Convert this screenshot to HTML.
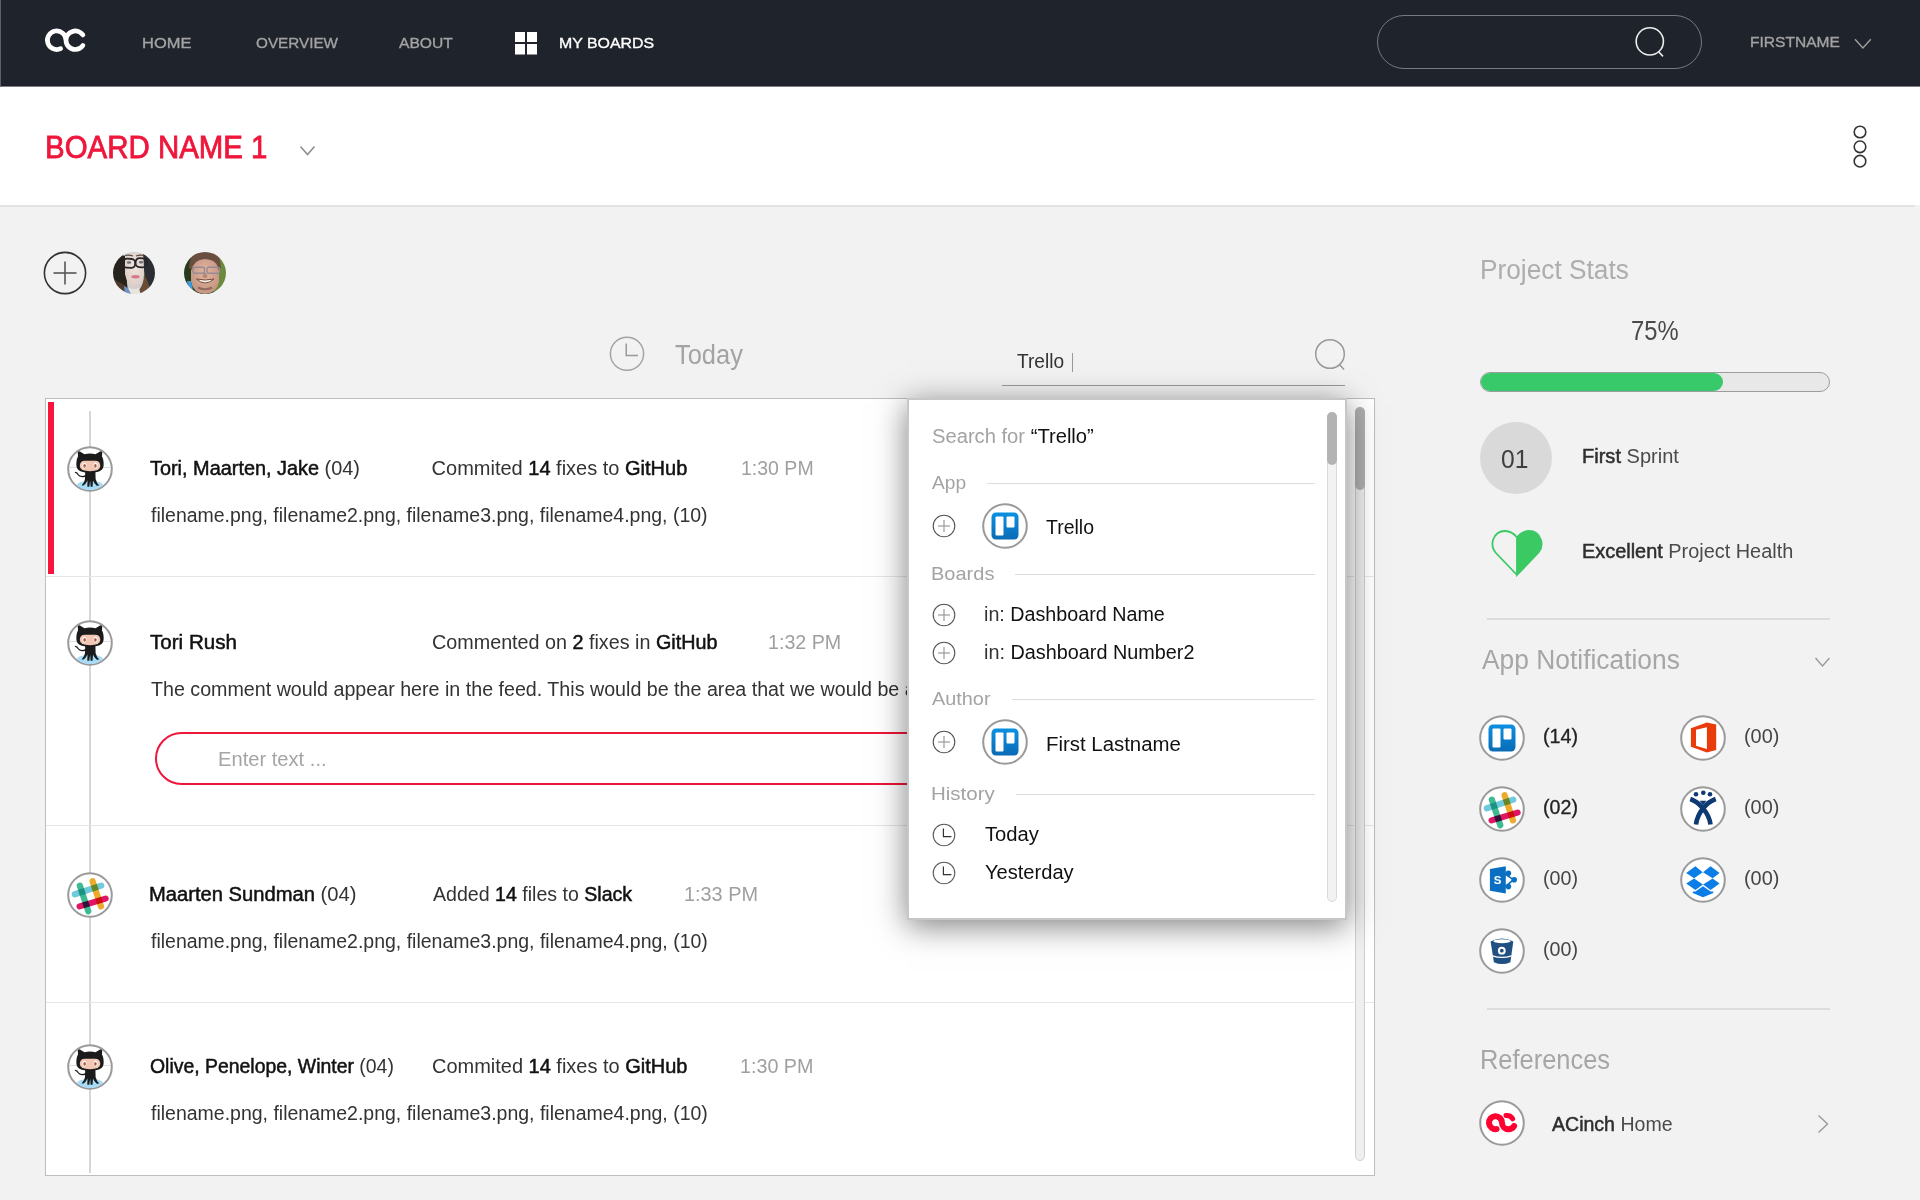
<!DOCTYPE html>
<html><head><meta charset="utf-8"><title>Board</title>
<style>
html,body{margin:0;padding:0;}
body{width:1920px;height:1200px;position:relative;overflow:hidden;background:#f2f2f2;font-family:"Liberation Sans",sans-serif;}
.t{position:absolute;white-space:nowrap;line-height:1;transform-origin:0 0;}
.m{-webkit-text-stroke:0.5px currentColor;}
</style></head><body>
<div style="position:absolute;left:0px;top:0px;width:1920px;height:86px;background:#1f232b"></div>
<div style="position:absolute;left:0px;top:85px;width:1920px;height:1px;background:#1b1f26"></div>
<div style="position:absolute;left:0px;top:86px;width:1920px;height:1px;background:rgba(31,35,43,0.55)"></div>
<div style="position:absolute;left:0px;top:0px;width:1px;height:87px;background:#5d6167"></div>
<svg style="position:absolute;left:40px;top:22px;" width="52" height="36" viewBox="0 0 52 36"><path d="M20.63 26.63 A9.3 9.3 0 1 1 26 18.2 A9.3 9.3 0 0 0 35.3 27.5 A9.3 9.3 0 0 0 42.9 23.5 M26 18.2 A9.3 9.3 0 0 1 42.9 12.9" fill="none" stroke="#fff" stroke-width="4.7" stroke-linecap="round"/></svg>
<div id="nav_home" class="t" style="left:142.4px;top:35.18px;font-size:15.5px;color:#a3a3a3;transform:scaleX(1.0628);-webkit-text-stroke:0.35px currentColor;">HOME</div>
<div id="nav_over" class="t" style="left:255.6px;top:35.18px;font-size:15.5px;color:#a3a3a3;transform:scaleX(0.9853);-webkit-text-stroke:0.35px currentColor;">OVERVIEW</div>
<div id="nav_about" class="t" style="left:399.4px;top:35.18px;font-size:15.5px;color:#a3a3a3;transform:scaleX(1.0088);-webkit-text-stroke:0.35px currentColor;">ABOUT</div>
<svg style="position:absolute;left:515px;top:32px;" width="22" height="23" viewBox="0 0 22 23"><rect x="0" y="0" width="10" height="10" fill="#fff"/><rect x="12" y="0" width="10" height="10" fill="#fff"/><rect x="0" y="12" width="10" height="10.5" fill="#fff"/><rect x="12" y="12" width="10" height="10.5" fill="#fff"/></svg>
<div id="nav_boards" class="t" style="left:559.0px;top:35.18px;font-size:15.5px;color:#ffffff;transform:scaleX(1.0253);-webkit-text-stroke:0.35px currentColor;">MY BOARDS</div>
<div style="position:absolute;left:1377px;top:15px;width:325px;height:53.5px;box-sizing:border-box;border:1.7px solid #777a80;border-radius:27px"></div>
<svg style="position:absolute;left:1630px;top:22px;" width="40" height="40" viewBox="0 0 40 40"><circle cx="19.8" cy="19.4" r="13.6" fill="none" stroke="#eee" stroke-width="1.6"/><line x1="28.6" y1="29.8" x2="33" y2="34.4" stroke="#eee" stroke-width="1.6"/></svg>
<div id="nav_first" class="t" style="left:1749.7px;top:34.18px;font-size:15.5px;color:#a3a3a3;transform:scaleX(1.0032);-webkit-text-stroke:0.35px currentColor;">FIRSTNAME</div>
<svg style="position:absolute;left:1853px;top:36px;" width="20" height="14" viewBox="0 0 20 14"><polyline points="2,3.2 9.9,12 17.8,3.2" fill="none" stroke="#a0a0a0" stroke-width="1.4"/></svg>
<div style="position:absolute;left:0px;top:87px;width:1920px;height:118px;background:#fff"></div>
<div style="position:absolute;left:0px;top:205px;width:1915px;height:2px;background:#e3e3e3"></div>
<div id="title" class="t" style="left:44.6px;top:131.76px;font-size:31px;color:#ef163b;-webkit-text-stroke:0.5px currentColor;transform:scaleX(0.9497);-webkit-text-stroke:0.8px currentColor;">BOARD NAME 1</div>
<svg style="position:absolute;left:298px;top:142px;" width="20" height="16" viewBox="0 0 20 16"><polyline points="2.5,4.5 9.5,12.5 16.5,4.5" fill="none" stroke="#8c8c8c" stroke-width="1.5"/></svg>
<svg style="position:absolute;left:1848px;top:122px;" width="24" height="48" viewBox="0 0 24 48"><circle cx="12" cy="10" r="5.8" fill="none" stroke="#333" stroke-width="1.6"/><circle cx="12" cy="24.8" r="5.8" fill="none" stroke="#333" stroke-width="1.6"/><circle cx="12" cy="39.2" r="5.8" fill="none" stroke="#333" stroke-width="1.6"/></svg>
<svg style="position:absolute;left:42px;top:250px;" width="46" height="46" viewBox="0 0 46 46"><circle cx="23" cy="23" r="20.6" fill="none" stroke="#333" stroke-width="1.6"/><line x1="11.5" y1="23" x2="34.5" y2="23" stroke="#555" stroke-width="1.6"/><line x1="23" y1="11.5" x2="23" y2="34.5" stroke="#555" stroke-width="1.6"/></svg>
<svg style="position:absolute;left:112.9px;top:251.8px;" width="42" height="42" viewBox="0 0 42 42"><defs><clipPath id="ca1"><circle cx="21" cy="21" r="21"/></clipPath>
<filter id="bl1" x="-10%" y="-10%" width="120%" height="120%"><feGaussianBlur stdDeviation="0.55"/></filter>
<radialGradient id="gface" cx="0.5" cy="0.4" r="0.6"><stop offset="0" stop-color="#f0e6e2"/><stop offset="1" stop-color="#dccbc4"/></radialGradient></defs>
<g clip-path="url(#ca1)"><g filter="url(#bl1)"><rect x="-2" y="-2" width="46" height="46" fill="#cfcfcf"/>
<path d="M-2 4 Q6 1 12 4 L14 20 Q13 30 16 44 L-2 44Z" fill="#27221f"/>
<path d="M-2 26 Q6 30 13 34 L16 44 L-2 44Z" fill="#4e3a2c"/>
<path d="M30 2 Q40 4 44 10 L44 44 L27 44 Q33 30 31 18Z" fill="#2c2e33"/>
<path d="M31 22 Q31 32 26 38 L27 44 L38 44 Q37 32 31 22Z" fill="#6a4c36"/>
<path d="M12 3 Q21 -1 30 3 L31 22 Q29 33 21 36 Q14 33 12 22Z" fill="url(#gface)"/>
<path d="M12 3.5 Q16 2.5 20 4" fill="none" stroke="#5a4a44" stroke-width="1.2"/><path d="M23 4 Q27 2.5 31 3.5" fill="none" stroke="#5a4a44" stroke-width="1.2"/>
<ellipse cx="16" cy="10.5" rx="2.2" ry="1.3" fill="#6b6f78"/><ellipse cx="28" cy="10.2" rx="2.2" ry="1.3" fill="#6b6f78"/>
<rect x="10.2" y="6.8" width="12" height="9" rx="3.8" fill="none" stroke="#262626" stroke-width="1.8" transform="rotate(4 16 11)"/>
<rect x="22.6" y="6.2" width="11" height="9" rx="3.8" fill="none" stroke="#262626" stroke-width="1.8" transform="rotate(4 28 11)"/>
<ellipse cx="22.5" cy="24.8" rx="4.2" ry="1.7" fill="#d87987"/>
<path d="M16 36 Q21 38 26 36 L28 44 L14 44Z" fill="#e9e4df"/>
<path d="M11 34 L15 36 L19 44 L12 44Z" fill="#6f90c4"/></g></g></svg>
<svg style="position:absolute;left:184px;top:252px;" width="42" height="42" viewBox="0 0 42 42"><defs><clipPath id="ca2"><circle cx="21" cy="21" r="21"/></clipPath>
<filter id="bl2" x="-10%" y="-10%" width="120%" height="120%"><feGaussianBlur stdDeviation="0.55"/></filter>
<radialGradient id="gface2" cx="0.5" cy="0.45" r="0.6"><stop offset="0" stop-color="#e2b6a3"/><stop offset="1" stop-color="#c2937e"/></radialGradient></defs>
<g clip-path="url(#ca2)"><g filter="url(#bl2)"><rect x="-2" y="-2" width="46" height="46" fill="#263a1c"/>
<path d="M33 6 L44 6 L44 44 L30 44Z" fill="#6a8a3c"/>
<path d="M7 14 Q7 3 21 3 Q35 3 35 14 L35 30 Q33 41 21 42 Q9 41 7 30Z" fill="url(#gface2)"/>
<path d="M5 16 Q5 -1 21 -1 Q37 -1 37 16 L34 18 Q34 8 21 7 Q9 8 8 18Z" fill="#6b5040"/>
<rect x="9" y="15.2" width="11.5" height="6" rx="2" fill="none" stroke="#978a96" stroke-width="1.4"/>
<rect x="23" y="15.2" width="12.5" height="6" rx="2" fill="none" stroke="#978a96" stroke-width="1.4"/>
<path d="M19.5 21.5 L22.5 21.5" stroke="#978a96" stroke-width="1.2"/>
<ellipse cx="21" cy="24" rx="2.5" ry="2" fill="#b98472"/>
<path d="M12.5 27 Q21 35 30 27 Q21 29 12.5 27Z" fill="#f6f0ea" stroke="#7a4c3c" stroke-width="1"/>
<path d="M14 35.5 Q21 39 28 35.5" fill="none" stroke="#6a4a3d" stroke-width="2" opacity="0.6"/>
<path d="M3 29 L7 29 L9 38 L4 38Z" fill="#3c9ad8"/></g></g></svg>
<svg style="position:absolute;left:608px;top:335px;" width="38" height="38" viewBox="0 0 38 38"><circle cx="19" cy="18.75" r="16.6" fill="none" stroke="#a3a3a3" stroke-width="1.5"/><polyline points="18.25,8.5 18.25,20.4 30,20.4" fill="none" stroke="#999" stroke-width="1.5"/></svg>
<div id="today" class="t" style="left:675.4px;top:342.14px;font-size:27px;color:#a3a3a3;transform:scaleX(0.9421);">Today</div>
<div id="trello_in" class="t" style="left:1017.0px;top:350.87px;font-size:20px;color:#333;transform:scaleX(0.9564);">Trello</div>
<div style="position:absolute;left:1072.2px;top:353px;width:1.2px;height:19px;background:#999"></div>
<div style="position:absolute;left:1002px;top:384.5px;width:343px;height:1.5px;background:#999"></div>
<svg style="position:absolute;left:1310px;top:333px;" width="44" height="44" viewBox="0 0 44 44"><circle cx="20" cy="21" r="14.3" fill="none" stroke="#999" stroke-width="1.5"/><line x1="29.5" y1="31.5" x2="34" y2="36.5" stroke="#999" stroke-width="1.5"/></svg>
<div style="position:absolute;left:45px;top:398px;width:1330px;height:778px;box-sizing:border-box;background:#fff;border:1px solid #bdbdbd"></div>
<div style="position:absolute;left:48px;top:402px;width:6px;height:172px;background:#f8163d"></div>
<div style="position:absolute;left:89px;top:411px;width:2px;height:762px;background:#d6d6d6"></div>
<div style="position:absolute;left:46px;top:576px;width:1308px;height:1px;background:#e6e6e6"></div>
<div style="position:absolute;left:1365px;top:576px;width:9px;height:1px;background:#e6e6e6"></div>
<div style="position:absolute;left:46px;top:825px;width:1308px;height:1px;background:#e6e6e6"></div>
<div style="position:absolute;left:1365px;top:825px;width:9px;height:1px;background:#e6e6e6"></div>
<div style="position:absolute;left:46px;top:1002px;width:1308px;height:1px;background:#e6e6e6"></div>
<div style="position:absolute;left:1365px;top:1002px;width:9px;height:1px;background:#e6e6e6"></div>
<div style="position:absolute;left:1355px;top:407px;width:10px;height:754px;box-sizing:border-box;background:#efefef;border:1px solid #cfcfcf;border-radius:5px"></div>
<div style="position:absolute;left:1355px;top:407px;width:10px;height:83px;background:#b0b0b0;border-radius:5px"></div>
<svg style="position:absolute;left:67px;top:445.5px;" width="46" height="46" viewBox="0 0 46 46"><defs><clipPath id="oc1"><circle cx="23" cy="23" r="21"/></clipPath></defs>
<circle cx="23" cy="23" r="21.8" fill="#fff" stroke="#9a9a9a" stroke-width="2"/>
<g clip-path="url(#oc1)">
<line x1="2" y1="21.5" x2="44" y2="21.5" stroke="#dedede" stroke-width="1.2"/>
<ellipse cx="23" cy="39.5" rx="13" ry="4.8" fill="#a6dcf6"/>
<path d="M9.4 19.5 Q9.1 13.5 11 10.5 L10.8 6.6 Q11 4.6 12.9 5.4 Q15.6 6.7 17.5 8.3 Q23 6.6 28.5 8.3 Q30.4 6.7 33.1 5.4 Q35 4.6 35.2 6.6 L35 10.5 Q36.9 13.5 36.6 19.5 Q36.2 26.8 23 26.8 Q9.8 26.8 9.4 19.5Z" fill="#1b1b1b"/>
<path d="M12.8 20 Q12.8 14.8 18 14.8 L28 14.8 Q33.3 14.8 33.3 20 Q33.3 25.2 23 25.2 Q12.8 25.2 12.8 20Z" fill="#f2c8b4"/>
<ellipse cx="17.4" cy="19.6" rx="2" ry="2.8" fill="#fff"/><ellipse cx="28.6" cy="19.6" rx="2" ry="2.8" fill="#fff"/>
<ellipse cx="17.6" cy="19.8" rx="1.3" ry="1.9" fill="#ad5c4c"/><ellipse cx="28.4" cy="19.8" rx="1.3" ry="1.9" fill="#ad5c4c"/>
<path d="M18.2 26 L28.4 26 Q28.6 31 28.6 33 Q29.5 37 32.3 39.5 L29.8 39.8 Q27 37.5 26 34.5 L25.6 40.8 L23.6 40.8 L23.2 34.5 L22.3 40.8 L20.3 40.8 L20.5 34.5 Q19 38 16 39.8 L14.8 39.2 Q17.6 36.5 18 33 Q18 30 18.2 26Z" fill="#1b1b1b"/>
<path d="M18.5 30 Q13 31.8 11 28.5 Q10 26.6 8.5 26.4" fill="none" stroke="#1b1b1b" stroke-width="1.4" stroke-linecap="round"/>
</g></svg>
<svg style="position:absolute;left:67px;top:619.8px;" width="46" height="46" viewBox="0 0 46 46"><defs><clipPath id="oc2"><circle cx="23" cy="23" r="21"/></clipPath></defs>
<circle cx="23" cy="23" r="21.8" fill="#fff" stroke="#9a9a9a" stroke-width="2"/>
<g clip-path="url(#oc2)">
<line x1="2" y1="21.5" x2="44" y2="21.5" stroke="#dedede" stroke-width="1.2"/>
<ellipse cx="23" cy="39.5" rx="13" ry="4.8" fill="#a6dcf6"/>
<path d="M9.4 19.5 Q9.1 13.5 11 10.5 L10.8 6.6 Q11 4.6 12.9 5.4 Q15.6 6.7 17.5 8.3 Q23 6.6 28.5 8.3 Q30.4 6.7 33.1 5.4 Q35 4.6 35.2 6.6 L35 10.5 Q36.9 13.5 36.6 19.5 Q36.2 26.8 23 26.8 Q9.8 26.8 9.4 19.5Z" fill="#1b1b1b"/>
<path d="M12.8 20 Q12.8 14.8 18 14.8 L28 14.8 Q33.3 14.8 33.3 20 Q33.3 25.2 23 25.2 Q12.8 25.2 12.8 20Z" fill="#f2c8b4"/>
<ellipse cx="17.4" cy="19.6" rx="2" ry="2.8" fill="#fff"/><ellipse cx="28.6" cy="19.6" rx="2" ry="2.8" fill="#fff"/>
<ellipse cx="17.6" cy="19.8" rx="1.3" ry="1.9" fill="#ad5c4c"/><ellipse cx="28.4" cy="19.8" rx="1.3" ry="1.9" fill="#ad5c4c"/>
<path d="M18.2 26 L28.4 26 Q28.6 31 28.6 33 Q29.5 37 32.3 39.5 L29.8 39.8 Q27 37.5 26 34.5 L25.6 40.8 L23.6 40.8 L23.2 34.5 L22.3 40.8 L20.3 40.8 L20.5 34.5 Q19 38 16 39.8 L14.8 39.2 Q17.6 36.5 18 33 Q18 30 18.2 26Z" fill="#1b1b1b"/>
<path d="M18.5 30 Q13 31.8 11 28.5 Q10 26.6 8.5 26.4" fill="none" stroke="#1b1b1b" stroke-width="1.4" stroke-linecap="round"/>
</g></svg>
<svg style="position:absolute;left:67px;top:871.7px;" width="46" height="46" viewBox="0 0 46 46"><circle cx="23" cy="23" r="21.8" fill="#fff" stroke="#9a9a9a" stroke-width="2"/><g style="isolation:isolate" stroke-linecap="round" stroke-width="6.2">
<line x1="7.8" y1="22.3" x2="34.3" y2="13.6" stroke="#6ecadc" style="mix-blend-mode:multiply"/>
<line x1="12.6" y1="34.4" x2="38.6" y2="26.6" stroke="#e01563" style="mix-blend-mode:multiply"/>
<line x1="12.8" y1="13.6" x2="21.3" y2="39.2" stroke="#3eba92" style="mix-blend-mode:multiply"/>
<line x1="25.6" y1="9.3" x2="34" y2="34.4" stroke="#ebab2c" style="mix-blend-mode:multiply"/></g></svg>
<svg style="position:absolute;left:67px;top:1043.7px;" width="46" height="46" viewBox="0 0 46 46"><defs><clipPath id="oc4"><circle cx="23" cy="23" r="21"/></clipPath></defs>
<circle cx="23" cy="23" r="21.8" fill="#fff" stroke="#9a9a9a" stroke-width="2"/>
<g clip-path="url(#oc4)">
<line x1="2" y1="21.5" x2="44" y2="21.5" stroke="#dedede" stroke-width="1.2"/>
<ellipse cx="23" cy="39.5" rx="13" ry="4.8" fill="#a6dcf6"/>
<path d="M9.4 19.5 Q9.1 13.5 11 10.5 L10.8 6.6 Q11 4.6 12.9 5.4 Q15.6 6.7 17.5 8.3 Q23 6.6 28.5 8.3 Q30.4 6.7 33.1 5.4 Q35 4.6 35.2 6.6 L35 10.5 Q36.9 13.5 36.6 19.5 Q36.2 26.8 23 26.8 Q9.8 26.8 9.4 19.5Z" fill="#1b1b1b"/>
<path d="M12.8 20 Q12.8 14.8 18 14.8 L28 14.8 Q33.3 14.8 33.3 20 Q33.3 25.2 23 25.2 Q12.8 25.2 12.8 20Z" fill="#f2c8b4"/>
<ellipse cx="17.4" cy="19.6" rx="2" ry="2.8" fill="#fff"/><ellipse cx="28.6" cy="19.6" rx="2" ry="2.8" fill="#fff"/>
<ellipse cx="17.6" cy="19.8" rx="1.3" ry="1.9" fill="#ad5c4c"/><ellipse cx="28.4" cy="19.8" rx="1.3" ry="1.9" fill="#ad5c4c"/>
<path d="M18.2 26 L28.4 26 Q28.6 31 28.6 33 Q29.5 37 32.3 39.5 L29.8 39.8 Q27 37.5 26 34.5 L25.6 40.8 L23.6 40.8 L23.2 34.5 L22.3 40.8 L20.3 40.8 L20.5 34.5 Q19 38 16 39.8 L14.8 39.2 Q17.6 36.5 18 33 Q18 30 18.2 26Z" fill="#1b1b1b"/>
<path d="M18.5 30 Q13 31.8 11 28.5 Q10 26.6 8.5 26.4" fill="none" stroke="#1b1b1b" stroke-width="1.4" stroke-linecap="round"/>
</g></svg>
<div id="r1_name" class="t" style="left:150.2px;top:457.77px;font-size:20px;color:#333;transform:scaleX(0.9942);"><span class="m" style="color:#111">Tori, Maarten, Jake</span> (04)</div>
<div id="r1_act" class="t" style="left:431.6px;top:457.77px;font-size:20px;color:#333;">Commited <span class="m" style="color:#111">14</span> fixes to <span class="m" style="color:#111">GitHub</span></div>
<div id="r1_time" class="t" style="left:741.0px;top:457.77px;font-size:20px;color:#9f9f9f;transform:scaleX(0.9750);">1:30 PM</div>
<div id="r1_files" class="t" style="left:150.5px;top:504.67px;font-size:20px;color:#333;transform:scaleX(0.9739);">filename.png, filename2.png, filename3.png, filename4.png, (10)</div>
<div id="r2_name" class="t" style="left:150.2px;top:632.07px;font-size:20px;color:#333;transform:scaleX(1.0294);"><span class="m" style="color:#111">Tori Rush</span></div>
<div id="r2_act" class="t" style="left:431.6px;top:632.07px;font-size:20px;color:#333;transform:scaleX(0.9875);">Commented on <span class="m" style="color:#111">2</span> fixes in <span class="m" style="color:#111">GitHub</span></div>
<div id="r2_time" class="t" style="left:768.0px;top:632.07px;font-size:20px;color:#9f9f9f;transform:scaleX(0.9832);">1:32 PM</div>
<div id="r2_comment" class="t" style="left:150.5px;top:679.47px;font-size:20px;color:#333;transform:scaleX(0.9830);">The comment would appear here in the feed. This would be the area that we would be able to see the entire comment</div>
<div style="position:absolute;left:155px;top:732px;width:1000px;height:53px;box-sizing:border-box;border:2px solid #ef163b;border-radius:27px;background:#fff"></div>
<div id="r2_enter" class="t" style="left:218.0px;top:749.07px;font-size:20px;color:#a5a5a5;transform:scaleX(1.0070);">Enter text ...</div>
<div id="r3_name" class="t" style="left:149.2px;top:884.27px;font-size:20px;color:#333;transform:scaleX(1.0088);"><span class="m" style="color:#111">Maarten Sundman</span> (04)</div>
<div id="r3_act" class="t" style="left:432.6px;top:884.27px;font-size:20px;color:#333;transform:scaleX(0.9787);">Added <span class="m" style="color:#111">14</span> files to <span class="m" style="color:#111">Slack</span></div>
<div id="r3_time" class="t" style="left:684.0px;top:884.27px;font-size:20px;color:#9f9f9f;transform:scaleX(0.9928);">1:33 PM</div>
<div id="r3_files" class="t" style="left:150.5px;top:930.97px;font-size:20px;color:#333;transform:scaleX(0.9744);">filename.png, filename2.png, filename3.png, filename4.png, (10)</div>
<div id="r4_name" class="t" style="left:150.2px;top:1056.27px;font-size:20px;color:#333;transform:scaleX(0.9706);"><span class="m" style="color:#111">Olive, Penelope, Winter</span> (04)</div>
<div id="r4_act" class="t" style="left:431.6px;top:1056.27px;font-size:20px;color:#333;transform:scaleX(0.9987);">Commited <span class="m" style="color:#111">14</span> fixes to <span class="m" style="color:#111">GitHub</span></div>
<div id="r4_time" class="t" style="left:739.8px;top:1056.27px;font-size:20px;color:#9f9f9f;transform:scaleX(0.9860);">1:30 PM</div>
<div id="r4_files" class="t" style="left:150.5px;top:1102.97px;font-size:20px;color:#333;transform:scaleX(0.9744);">filename.png, filename2.png, filename3.png, filename4.png, (10)</div>
<div style="position:absolute;left:907px;top:398px;width:440px;height:522px;box-sizing:border-box;border:2px solid #c7c7c7;background:#fff;box-shadow:0 6px 30px rgba(0,0,0,0.5)"></div>
<div id="dd_search" class="t" style="left:931.9px;top:426.07px;font-size:20px;color:#111;transform:scaleX(1.0085);"><span style="color:#a3a3a3">Search for </span><span style="color:#111">&ldquo;Trello&rdquo;</span></div>
<div id="dd_app" class="t" style="left:931.8px;top:472.62px;font-size:19px;color:#a3a3a3;transform:scaleX(1.0108);">App</div>
<div style="position:absolute;left:987px;top:483px;width:328px;height:1px;background:#dcdcdc"></div>
<div id="dd_boards" class="t" style="left:930.7px;top:563.62px;font-size:19px;color:#a3a3a3;transform:scaleX(1.0528);">Boards</div>
<div style="position:absolute;left:1015px;top:574px;width:300px;height:1px;background:#dcdcdc"></div>
<div id="dd_author" class="t" style="left:931.8px;top:688.62px;font-size:19px;color:#a3a3a3;transform:scaleX(1.0450);">Author</div>
<div style="position:absolute;left:1012px;top:699px;width:303px;height:1px;background:#dcdcdc"></div>
<div id="dd_hist" class="t" style="left:930.7px;top:784.12px;font-size:19px;color:#a3a3a3;transform:scaleX(1.0782);">History</div>
<div style="position:absolute;left:1016px;top:794px;width:299px;height:1px;background:#dcdcdc"></div>
<svg style="position:absolute;left:932px;top:513.7px;" width="24" height="24" viewBox="0 0 24 24"><circle cx="12" cy="12" r="10.8" fill="none" stroke="#555" stroke-width="1.1"/><line x1="6" y1="12" x2="18" y2="12" stroke="#999" stroke-width="1.2"/><line x1="12" y1="6" x2="12" y2="18" stroke="#999" stroke-width="1.2"/></svg>
<svg style="position:absolute;left:982px;top:502.70000000000005px;" width="46" height="46" viewBox="0 0 46 46"><defs><linearGradient id="tg1" x1="0" y1="0" x2="0" y2="1"><stop offset="0" stop-color="#0c90e2"/><stop offset="1" stop-color="#0a6cb5"/></linearGradient></defs>
<circle cx="23" cy="23" r="21.8" fill="#fff" stroke="#9a9a9a" stroke-width="2"/>
<rect x="9.5" y="9.5" width="27" height="27" rx="4.5" fill="url(#tg1)"/>
<rect x="13.5" y="13.5" width="8" height="19" rx="1" fill="#fff"/>
<rect x="24.5" y="13.5" width="8" height="11" rx="1" fill="#fff"/></svg>
<div id="dd_trello" class="t" style="left:1046.3px;top:517.27px;font-size:20px;color:#111;transform:scaleX(0.9742);">Trello</div>
<svg style="position:absolute;left:932px;top:602.8px;" width="24" height="24" viewBox="0 0 24 24"><circle cx="12" cy="12" r="10.8" fill="none" stroke="#555" stroke-width="1.1"/><line x1="6" y1="12" x2="18" y2="12" stroke="#999" stroke-width="1.2"/><line x1="12" y1="6" x2="12" y2="18" stroke="#999" stroke-width="1.2"/></svg>
<div id="dd_b1" class="t" style="left:983.7px;top:604.17px;font-size:20px;color:#111;transform:scaleX(0.9857);"><span style="color:#333">in: </span>Dashboard Name</div>
<svg style="position:absolute;left:932px;top:640.8px;" width="24" height="24" viewBox="0 0 24 24"><circle cx="12" cy="12" r="10.8" fill="none" stroke="#555" stroke-width="1.1"/><line x1="6" y1="12" x2="18" y2="12" stroke="#999" stroke-width="1.2"/><line x1="12" y1="6" x2="12" y2="18" stroke="#999" stroke-width="1.2"/></svg>
<div id="dd_b2" class="t" style="left:983.7px;top:641.97px;font-size:20px;color:#111;transform:scaleX(0.9910);"><span style="color:#333">in: </span>Dashboard Number2</div>
<svg style="position:absolute;left:932px;top:730px;" width="24" height="24" viewBox="0 0 24 24"><circle cx="12" cy="12" r="10.8" fill="none" stroke="#555" stroke-width="1.1"/><line x1="6" y1="12" x2="18" y2="12" stroke="#999" stroke-width="1.2"/><line x1="12" y1="6" x2="12" y2="18" stroke="#999" stroke-width="1.2"/></svg>
<svg style="position:absolute;left:982px;top:719px;" width="46" height="46" viewBox="0 0 46 46"><defs><linearGradient id="tg2" x1="0" y1="0" x2="0" y2="1"><stop offset="0" stop-color="#0c90e2"/><stop offset="1" stop-color="#0a6cb5"/></linearGradient></defs>
<circle cx="23" cy="23" r="21.8" fill="#fff" stroke="#9a9a9a" stroke-width="2"/>
<rect x="9.5" y="9.5" width="27" height="27" rx="4.5" fill="url(#tg2)"/>
<rect x="13.5" y="13.5" width="8" height="19" rx="1" fill="#fff"/>
<rect x="24.5" y="13.5" width="8" height="11" rx="1" fill="#fff"/></svg>
<div id="dd_author_name" class="t" style="left:1046.0px;top:733.77px;font-size:20px;color:#111;transform:scaleX(1.0195);">First Lastname</div>
<svg style="position:absolute;left:932px;top:822.8px;" width="24" height="24" viewBox="0 0 24 24"><circle cx="12" cy="12" r="10.8" fill="none" stroke="#5a5a5a" stroke-width="1.1"/><polyline points="11.4,5.4 11.4,13.6 19.4,13.6" fill="none" stroke="#333" stroke-width="1.2"/></svg>
<div id="dd_today" class="t" style="left:984.6px;top:824.07px;font-size:20px;color:#111;transform:scaleX(1.0099);">Today</div>
<svg style="position:absolute;left:932px;top:860.5px;" width="24" height="24" viewBox="0 0 24 24"><circle cx="12" cy="12" r="10.8" fill="none" stroke="#5a5a5a" stroke-width="1.1"/><polyline points="11.4,5.4 11.4,13.6 19.4,13.6" fill="none" stroke="#333" stroke-width="1.2"/></svg>
<div id="dd_yest" class="t" style="left:984.6px;top:862.07px;font-size:20px;color:#111;transform:scaleX(1.0044);">Yesterday</div>
<div style="position:absolute;left:1327px;top:412px;width:10px;height:490px;box-sizing:border-box;background:#f2f2f2;border:1px solid #dadada;border-radius:5px"></div>
<div style="position:absolute;left:1327px;top:412px;width:10px;height:53px;background:#b3b3b3;border-radius:5px"></div>
<div id="ps_title" class="t" style="left:1480.1px;top:257.34px;font-size:27px;color:#adadad;transform:scaleX(0.9724);">Project Stats</div>
<div id="ps_pct" class="t" style="left:1630.9px;top:318.14px;font-size:27px;color:#4a4a4a;transform:scaleX(0.8806);">75%</div>
<div style="position:absolute;left:1480px;top:372px;width:350px;height:20px;box-sizing:border-box;background:#e8e8e8;border:1px solid #9c9c9c;border-radius:10px"></div>
<div style="position:absolute;left:1481px;top:373px;width:242px;height:18px;background:#37c96a;border-radius:9px"></div>
<div style="position:absolute;left:1480px;top:422px;width:72px;height:72px;background:#d9d9d9;border-radius:50%"></div>
<div id="ps_01" class="t" style="left:1500.9px;top:445.79px;font-size:26px;color:#3f3f3f;transform:scaleX(0.9468);">01</div>
<div id="ps_sprint" class="t" style="left:1581.7px;top:446.07px;font-size:20px;color:#2e2e2e;transform:scaleX(1.0018);"><span class="m" style="color:#2e2e2e">First</span> <span style="color:#4a4a4a">Sprint</span></div>
<svg style="position:absolute;left:1490px;top:528px;" width="54" height="50" viewBox="0 0 54 50"><path d="M27 47 L5.5 24.5 Q1 19 3 12 Q6 3 15 3 Q22 3 27 9.5" fill="none" stroke="#3bc964" stroke-width="1.8"/><path d="M27 47 L48.5 24.5 Q53 19 51 12 Q48 3 39 3 Q32 3 27 9.5Z" fill="#3bc964" stroke="#3bc964" stroke-width="1.8"/></svg>
<div id="ps_health" class="t" style="left:1581.7px;top:541.47px;font-size:20px;color:#2e2e2e;transform:scaleX(0.9948);"><span class="m" style="color:#2e2e2e">Excellent</span> <span style="color:#4a4a4a">Project Health</span></div>
<div style="position:absolute;left:1487px;top:618px;width:343px;height:1.5px;background:#dcdcdc"></div>
<div id="an_title" class="t" style="left:1481.6px;top:647.14px;font-size:27px;color:#a6a6a6;transform:scaleX(0.9767);">App Notifications</div>
<svg style="position:absolute;left:1814px;top:655px;" width="18" height="14" viewBox="0 0 18 14"><polyline points="1.5,3 8.5,11 15.5,3" fill="none" stroke="#999" stroke-width="1.4"/></svg>
<svg style="position:absolute;left:1479px;top:714.5px;" width="46" height="46" viewBox="0 0 46 46"><defs><linearGradient id="tg3" x1="0" y1="0" x2="0" y2="1"><stop offset="0" stop-color="#0c90e2"/><stop offset="1" stop-color="#0a6cb5"/></linearGradient></defs>
<circle cx="23" cy="23" r="21.8" fill="#fff" stroke="#9a9a9a" stroke-width="2"/>
<rect x="9.5" y="9.5" width="27" height="27" rx="4.5" fill="url(#tg3)"/>
<rect x="13.5" y="13.5" width="8" height="19" rx="1" fill="#fff"/>
<rect x="24.5" y="13.5" width="8" height="11" rx="1" fill="#fff"/></svg>
<div id="an_14" class="t" style="left:1543.2px;top:725.77px;font-size:20px;color:#222;transform:scaleX(0.9821);-webkit-text-stroke:0.3px currentColor;">(14)</div>
<svg style="position:absolute;left:1679.6px;top:714.8px;" width="46" height="46" viewBox="0 0 46 46"><circle cx="23" cy="23" r="21.8" fill="#fff" stroke="#9a9a9a" stroke-width="2"/><path fill-rule="evenodd" d="M10.9 13.2 L26.9 7.4 L36.2 9.6 L36.2 35 L26.9 37.5 L10.9 31.8Z M16 14.8 L26.9 12.2 L26.9 34 L16 30.8Z" fill="#e83c0c"/></svg>
<div id="an_o" class="t" style="left:1743.6px;top:725.77px;font-size:20px;color:#454545;transform:scaleX(0.9939);">(00)</div>
<svg style="position:absolute;left:1479px;top:785.7px;" width="46" height="46" viewBox="0 0 46 46"><circle cx="23" cy="23" r="21.8" fill="#fff" stroke="#9a9a9a" stroke-width="2"/><g style="isolation:isolate" stroke-linecap="round" stroke-width="6.2">
<line x1="7.8" y1="22.3" x2="34.3" y2="13.6" stroke="#6ecadc" style="mix-blend-mode:multiply"/>
<line x1="12.6" y1="34.4" x2="38.6" y2="26.6" stroke="#e01563" style="mix-blend-mode:multiply"/>
<line x1="12.8" y1="13.6" x2="21.3" y2="39.2" stroke="#3eba92" style="mix-blend-mode:multiply"/>
<line x1="25.6" y1="9.3" x2="34" y2="34.4" stroke="#ebab2c" style="mix-blend-mode:multiply"/></g></svg>
<div id="an_02" class="t" style="left:1543.2px;top:796.77px;font-size:20px;color:#222;transform:scaleX(0.9821);-webkit-text-stroke:0.3px currentColor;">(02)</div>
<svg style="position:absolute;left:1679.6px;top:786.1px;" width="46" height="46" viewBox="0 0 46 46"><circle cx="23" cy="23" r="21.8" fill="#fff" stroke="#9a9a9a" stroke-width="2"/><circle cx="16" cy="8.3" r="2.3" fill="#0e3a73"/><circle cx="23.3" cy="6.7" r="2.3" fill="#0e3a73"/><circle cx="30" cy="8.3" r="2.3" fill="#0e3a73"/><path d="M10.3 13 Q17.5 15.5 23 22.5 Q29.5 30 30.5 38.5" fill="none" stroke="#0e3a73" stroke-width="4.6"/><path d="M35.7 13 Q28.5 15.5 23 22.5 Q17 30 16 38.5" fill="none" stroke="#0e3a73" stroke-width="4.6"/><path d="M19.6 14.8 L26.4 14.8 L23 18.9Z" fill="#0e3a73"/></svg>
<div id="an_j" class="t" style="left:1743.6px;top:796.77px;font-size:20px;color:#454545;transform:scaleX(0.9939);">(00)</div>
<svg style="position:absolute;left:1478.8px;top:856.9px;" width="46" height="46" viewBox="0 0 46 46"><circle cx="23" cy="23" r="21.8" fill="#fff" stroke="#9a9a9a" stroke-width="2"/><path d="M26 17 L34.5 22.7 L26 29.8" fill="none" stroke="#0a6fc2" stroke-width="1.6"/><circle cx="29.4" cy="16.3" r="2.8" fill="#0a6fc2"/><circle cx="35.2" cy="22.7" r="2.8" fill="#0a6fc2"/><circle cx="29.4" cy="29.6" r="2.8" fill="#0a6fc2"/><path d="M10.9 12 L26.8 9.3 L26.8 36.4 L10.9 33.8Z" fill="#0a6fc2"/><text x="18.6" y="27.2" font-size="11.5" font-weight="700" fill="#fff" text-anchor="middle" font-family="Liberation Sans">S</text></svg>
<div id="an_sp" class="t" style="left:1543.2px;top:867.77px;font-size:20px;color:#454545;transform:scaleX(0.9821);">(00)</div>
<svg style="position:absolute;left:1679.5px;top:856.9px;" width="46" height="46" viewBox="0 0 46 46"><circle cx="23" cy="23" r="21.8" fill="#fff" stroke="#9a9a9a" stroke-width="2"/><path d="M6.2 15.9 L15.4 9.3 L22.7 15.3 L14.1 21.2Z M23 15.3 L30.6 9.3 L39.6 15.9 L32.6 21.2Z M6.2 26.5 L14.1 21.5 L22.9 27.6 L15.4 33.1Z M39.6 26.5 L32.6 21.5 L23.1 27.6 L30.6 33.1Z M12.8 34.5 L15.4 34.6 L23 29.3 L30.6 34.6 L33.3 34.5 L33.3 36 L23 40.3 L12.8 36Z" fill="#0a7ee6"/></svg>
<div id="an_db" class="t" style="left:1743.6px;top:867.77px;font-size:20px;color:#454545;transform:scaleX(0.9939);">(00)</div>
<svg style="position:absolute;left:1478.8px;top:927.9px;" width="46" height="46" viewBox="0 0 46 46"><circle cx="23" cy="23" r="21.8" fill="#fff" stroke="#9a9a9a" stroke-width="2"/><path d="M11.6 13.4 Q23 7.5 34.3 13.4 L31.4 34.2 Q23 38 14.9 34.2Z" fill="#205081"/><ellipse cx="23" cy="13.2" rx="8.6" ry="2" fill="#fff"/><circle cx="22.8" cy="22.7" r="2.9" fill="none" stroke="#fff" stroke-width="2"/><path d="M13.5 27.8 Q23 31 32.5 27.8" fill="none" stroke="#fff" stroke-width="1.4"/></svg>
<div id="an_bb" class="t" style="left:1543.2px;top:938.77px;font-size:20px;color:#454545;transform:scaleX(0.9821);">(00)</div>
<div style="position:absolute;left:1487px;top:1008px;width:343px;height:1.5px;background:#dcdcdc"></div>
<div id="ref_title" class="t" style="left:1480.1px;top:1046.84px;font-size:27px;color:#a6a6a6;transform:scaleX(0.9419);">References</div>
<svg style="position:absolute;left:1479px;top:1099.9px;" width="46" height="46" viewBox="0 0 46 46"><circle cx="23" cy="23" r="21.8" fill="#fff" stroke="#9a9a9a" stroke-width="2"/><path d="M17.6 29.1 A6.5 6.5 0 1 1 23 22.7 A6.5 6.5 0 0 0 29.5 29.2 A6.5 6.5 0 0 0 35.1 26" fill="none" stroke="#ff0030" stroke-width="6" stroke-linecap="round"/><path d="M27 15.6 Q31.5 15.2 33.6 18.8" fill="none" stroke="#ff0030" stroke-width="5" stroke-linecap="round"/></svg>
<div id="ref_home" class="t" style="left:1551.9px;top:1114.07px;font-size:20px;color:#2e2e2e;transform:scaleX(0.9768);"><span class="m" style="color:#2e2e2e">ACinch</span> <span style="color:#4a4a4a">Home</span></div>
<svg style="position:absolute;left:1814px;top:1112px;" width="18" height="24" viewBox="0 0 18 24"><polyline points="4.5,3.5 13.5,12 4.5,20.5" fill="none" stroke="#999" stroke-width="1.4"/></svg>
</body></html>
